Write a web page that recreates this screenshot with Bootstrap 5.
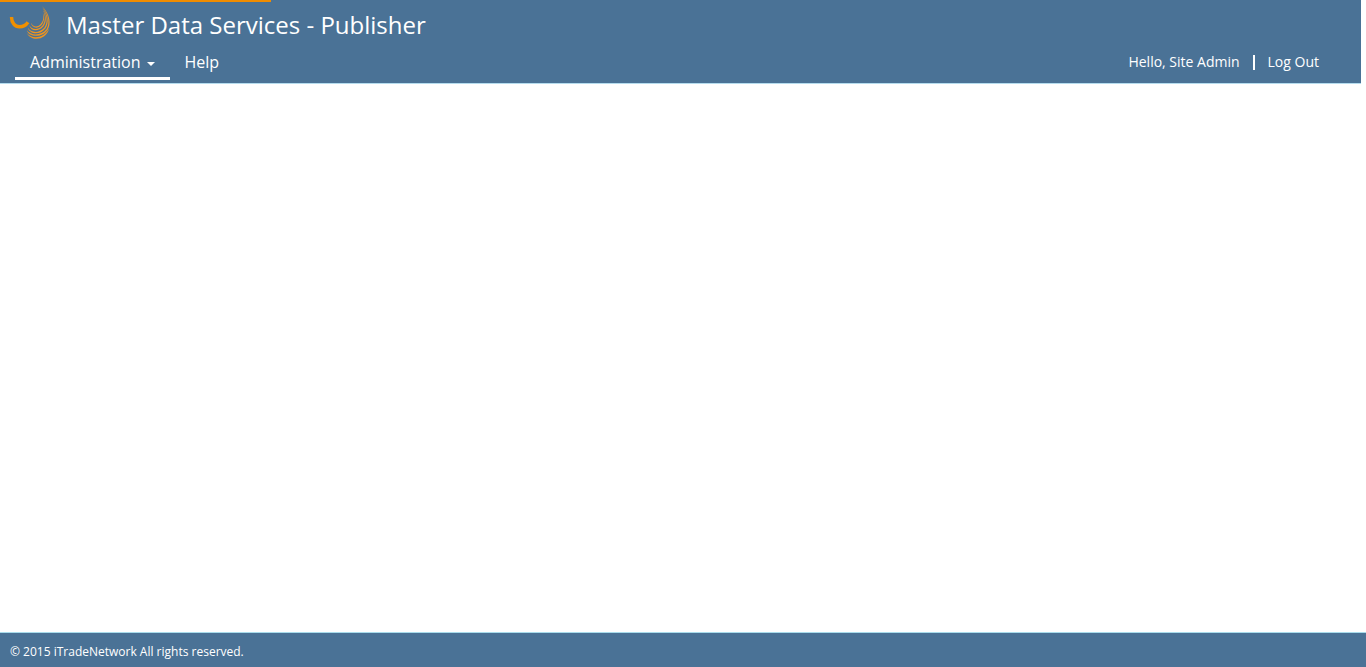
<!DOCTYPE html>
<html lang="en">
<head>
<meta charset="utf-8">
<meta name="viewport" content="width=device-width, initial-scale=1">
<title>Master Data Services - Publisher</title>
<link href="https://cdn.jsdelivr.net/npm/bootstrap@5.3.0/dist/css/bootstrap.min.css" rel="stylesheet">
<style>
  body { font-family: "Open Sans", sans-serif; color: #fff; background: #fff; }
  .load-bar { height: 2px; border-radius: 0; background: transparent; }
  .load-bar .progress-bar { background: #f08c00; }
  .site-header { background: #4a7296; border-bottom: 1px solid #b5dcee; margin-right: 5px; }
  .brand-row { height: 47px; padding: 3px 8px 0; gap: 14px; }
  .brand-title { font-size: 24px; line-height: 36px; }
  .menu-row { height: 36px; padding: 0 42px 3px 15px; }
  .main-nav .nav-link { height: 33px; padding: 0 15px; font-size: 16px; line-height: 30px; color: #fff; border-bottom: 3px solid transparent; }
  .main-nav .nav-link.active { border-bottom-color: #fff; }
  .main-nav .dropdown-toggle::after { border-width: 4px 4px 0; margin-left: 6px; vertical-align: 2px; }
  .user-links { font-size: 14px; line-height: 20px; gap: 13px; padding-bottom: 2px; }
  .user-links a { color: #fff; }
  .divider { width: 2px; height: 15px; margin-top: 2px; background: #fff; }
  .site-footer { background: #4a7296; border-top: 1px solid #a9dcec; padding: 10px 10px 6px; font-size: 12px; line-height: 18px; }
</style>
</head>
<body class="d-flex flex-column min-vh-100">
<div class="progress load-bar position-absolute top-0 start-0 w-100" role="progressbar" aria-label="Page loading" aria-valuenow="20" aria-valuemin="0" aria-valuemax="100">
  <div class="progress-bar" style="width:19.84%"></div>
</div>
<header class="site-header">
  <div class="brand-row d-flex align-items-start">
    <svg width="44" height="38" viewBox="8 3 44 38" aria-hidden="true">
      <path d="M11.5 17C11.5 23 15 26.8 19.5 26.8C23 26.8 26 25.2 28 22.3" fill="none" stroke="#f09000" stroke-width="3.4"/>
      <g fill="#ee9420">
        <path d="M42.8 13C45 17.5 44.2 21.5 41.5 25C37 29.5 32 28 30.8 22.5C33 27 37 27.8 40.5 24.3C43.5 21 44 17.5 42.8 13Z"/>
        <path d="M43 10C46.8 16 46.6 22 43.3 26.5C38.5 32 30.5 31.5 29.2 25C32 30.3 38 30.2 42.3 25.8C45.3 21.8 45.8 16.5 43 10Z"/>
        <path d="M42.2 7.5C48.6 15 49.2 23 45.4 28.5C40.5 35.2 29.5 35 27.8 27.6C31 33.5 39.5 33.2 44.3 27.8C47.7 22.8 47.8 16 42.2 7.5Z"/>
        <path d="M42 6C50.4 14.5 51 24 47.8 29.5C43 37.7 29.3 38 26.8 30.3C31 36.2 41.5 35.8 46.6 29C49.7 23.6 49.3 15.5 42 6Z"/>
        <path d="M49 28.5C46.5 40.5 31 42 26.8 33C31.5 39.5 44 38.7 49 28.5Z"/>
      </g>
    </svg>
    <h1 class="brand-title fw-normal m-0 pt-1">Master Data Services - Publisher</h1>
  </div>
  <div class="menu-row d-flex justify-content-between">
    <nav aria-label="Main">
      <ul class="nav main-nav">
        <li class="nav-item dropdown">
          <a class="nav-link dropdown-toggle active" href="#" role="button" data-bs-toggle="dropdown" aria-expanded="false">Administration</a>
        </li>
        <li class="nav-item"><a class="nav-link" href="#">Help</a></li>
      </ul>
    </nav>
    <div class="user-links d-flex align-items-center pb-1">
      <span>Hello, Site Admin</span>
      <span class="divider"></span>
      <a class="text-decoration-none" href="#">Log Out</a>
    </div>
  </div>
</header>
<main class="flex-grow-1"></main>
<footer class="site-footer">© 2015 iTradeNetwork All rights reserved.</footer>
<script src="https://cdn.jsdelivr.net/npm/bootstrap@5.3.0/dist/js/bootstrap.bundle.min.js"></script>
</body>
</html>
